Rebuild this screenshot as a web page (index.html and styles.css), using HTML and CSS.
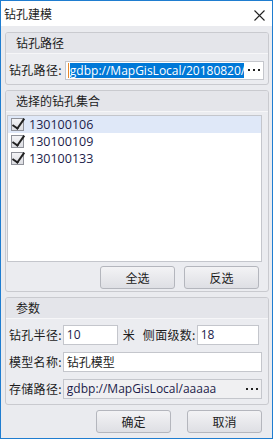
FILE: index.html
```html
<!DOCTYPE html>
<html lang="zh-CN">
<head>
  <meta charset="UTF-8" />
  <title>钻孔建模</title>
  <link rel="stylesheet" href="styles.css">
</head>
<body>
  <div class="window">
    <div class="titlebar">
      <span class="title">钻孔建模</span>
      <svg class="close" width="11" height="11" viewBox="0 0 11 11">
        <path d="M0.5 0.5 L10.5 10.5 M10.5 0.5 L0.5 10.5" stroke="#222" stroke-width="1.1" fill="none"/>
      </svg>
    </div>

    <div class="content">
      <div class="group group-path">
        <div class="group-header">钻孔路径</div>
        <div class="group-body">
          <div class="row">
            <span class="label">钻孔路径:</span>
            <div class="field field-path">
              <span class="caret"></span>
              <span class="field-text selected">gdbp://MapGisLocal/20180820/</span>
              <svg class="dots" width="18" height="6" viewBox="0 0 18 6">
                <rect x="3" y="2" width="2" height="2" fill="#222"/>
                <rect x="8" y="2" width="2" height="2" fill="#222"/>
                <rect x="13" y="2" width="2" height="2" fill="#222"/>
              </svg>
            </div>
          </div>
        </div>
      </div>

      <div class="group group-list">
        <div class="group-header">选择的钻孔集合</div>
        <div class="group-body">
          <div class="list">
            <div class="item active"><span class="check"></span>130100106</div>
            <div class="item"><span class="check"></span>130100109</div>
            <div class="item"><span class="check"></span>130100133</div>
          </div>
          <div class="list-buttons">
            <button class="btn">全选</button>
            <button class="btn">反选</button>
          </div>
        </div>
      </div>

      <div class="group group-params">
        <div class="group-header">参数</div>
        <div class="group-body">
          <div class="row">
            <span class="label">钻孔半径:</span>
            <div class="field field-small">10</div>
            <span class="unit">米</span>
            <span class="label">侧面级数:</span>
            <div class="field field-level">18</div>
          </div>
          <div class="row">
            <span class="label">模型名称:</span>
            <div class="field field-wide name">钻孔模型</div>
          </div>
          <div class="row">
            <span class="label">存储路径:</span>
            <div class="field field-wide readonly">
              <span class="field-text">gdbp://MapGisLocal/aaaaa</span>
              <svg class="dots" width="18" height="6" viewBox="0 0 18 6">
                <rect x="3" y="2" width="2" height="2" fill="#222"/>
                <rect x="8" y="2" width="2" height="2" fill="#222"/>
                <rect x="13" y="2" width="2" height="2" fill="#222"/>
              </svg>
            </div>
          </div>
        </div>
      </div>

      <div class="footer">
        <button class="btn">确定</button>
        <button class="btn">取消</button>
      </div>
    </div>
  </div>
</body>
</html>
```

FILE: styles.css
```css
:root {
  --frame: #1f7dd0;
  --window-bg: #eaebef;
  --group-bg: #ebecf0;
  --header-bg: #e4e5ea;
  --group-border: #c9cacf;
  --field-border: #c4c6cc;
  --text: #1c1c1c;
  --value: #1c1c4a;
  --select: #0078d7;
}

* {
  margin: 0;
  padding: 0;
  box-sizing: border-box;
}

body {
  font-family: "Open Sans", "Noto Sans CJK SC", sans-serif;
  font-size: 12px;
  line-height: 16px;
  color: var(--text);
  background: #fff;
}

.window {
  width: 273px;
  height: 439px;
  border: 1px solid var(--frame);
  display: flex;
  flex-direction: column;
  background: var(--window-bg);
}

.titlebar {
  height: 25px;
  background: #fff;
  display: flex;
  align-items: center;
  justify-content: space-between;
  padding: 0 7px 0 3px;
}

.title {
  font-family: "Noto Sans CJK SC", sans-serif;
  font-size: 12px;
  padding-top: 1px;
}

.close {
  margin-top: 4px;
}

.content {
  flex: 1;
  padding: 6px 3px 0 4px;
  display: flex;
  flex-direction: column;
  gap: 5px;
}

.group {
  border: 1px solid var(--group-border);
  border-radius: 3px;
  background: var(--group-bg);
  overflow: hidden;
}

.group-header {
  height: 21px;
  padding: 2px 0 0 10px;
  background: var(--header-bg);
  border-bottom: 1px solid #f6f6f8;
  font-family: "Noto Sans CJK SC", sans-serif;
}

.group-body {
  display: flex;
  flex-direction: column;
}

.group-path .group-body {
  padding: 6px 4px 4px 3px;
}

.row {
  display: flex;
  align-items: center;
  height: 20px;
}

.label {
  font-family: "Noto Sans CJK SC", sans-serif;
  white-space: nowrap;
  letter-spacing: 0.3px;
}

.field {
  height: 20px;
  border: 1px solid var(--field-border);
  background: #fff;
  color: var(--value);
  display: flex;
  align-items: center;
  padding-left: 3px;
  overflow: hidden;
  white-space: nowrap;
}

.field-path {
  height: 19px;
  margin-left: 3px;
  flex: 1;
  padding-left: 2px;
}

.caret {
  width: 1px;
  height: 15px;
  background: #e8892b;
  flex: none;
}

.field-text {
  flex: 1;
  overflow: hidden;
}

.selected {
  flex: none;
  width: 174px;
  background: var(--select);
  color: #fff;
  line-height: 15px;
  margin-left: 1px;
}

.dots {
  margin-left: auto;
  flex: none;
  background: #fff;
}

.group-list .group-body {
  padding: 3px 6px 0 1px;
}

.list {
  height: 147px;
  background: #fff;
  border: 1px solid var(--field-border);
  color: var(--value);
  font-size: 12.5px;
}

.item {
  height: 17px;
  display: flex;
  align-items: center;
  padding-left: 3px;
}

.item.active {
  background: #dfe8f8;
}

.check {
  width: 13px;
  height: 13px;
  border: 1px solid #8f9199;
  background: linear-gradient(#f4f4f6, #dcdde2);
  margin-right: 5px;
  position: relative;
}

.check::after {
  content: "";
  position: absolute;
  left: 3px;
  top: -3px;
  width: 5px;
  height: 11px;
  border-right: 2px solid #222;
  border-bottom: 2px solid #222;
  transform: rotate(35deg);
}

.list-buttons {
  display: flex;
  justify-content: flex-end;
  gap: 9px;
  padding: 4px 3px 2px 0;
}

.btn {
  width: 75px;
  height: 23px;
  border: 1px solid #b4b6bd;
  border-radius: 3px;
  background: linear-gradient(#f3f3f5, #dedfe4);
  font-family: "Noto Sans CJK SC", sans-serif;
  font-size: 12px;
  color: var(--text);
}

.group-params .group-body {
  padding: 5px 6px 5px 3px;
  gap: 6px;
}

.group-params .row {
  height: 21px;
}

.field-small {
  width: 55px;
  margin-left: 1px;
}

.unit {
  margin: 0 8px 0 5px;
  font-family: "Noto Sans CJK SC", sans-serif;
}

.field-level {
  width: 62px;
  margin-left: 1px;
}

.field-wide {
  flex: 1;
  margin-left: 1px;
}

.name {
  font-family: "Noto Sans CJK SC", sans-serif;
  color: var(--text);
}

.readonly {
  background: #f0f0f2;
}

.readonly .dots {
  background: transparent;
}

.footer {
  display: flex;
  justify-content: flex-end;
  gap: 16px;
  padding: 0 7px 0 0;
}
```
